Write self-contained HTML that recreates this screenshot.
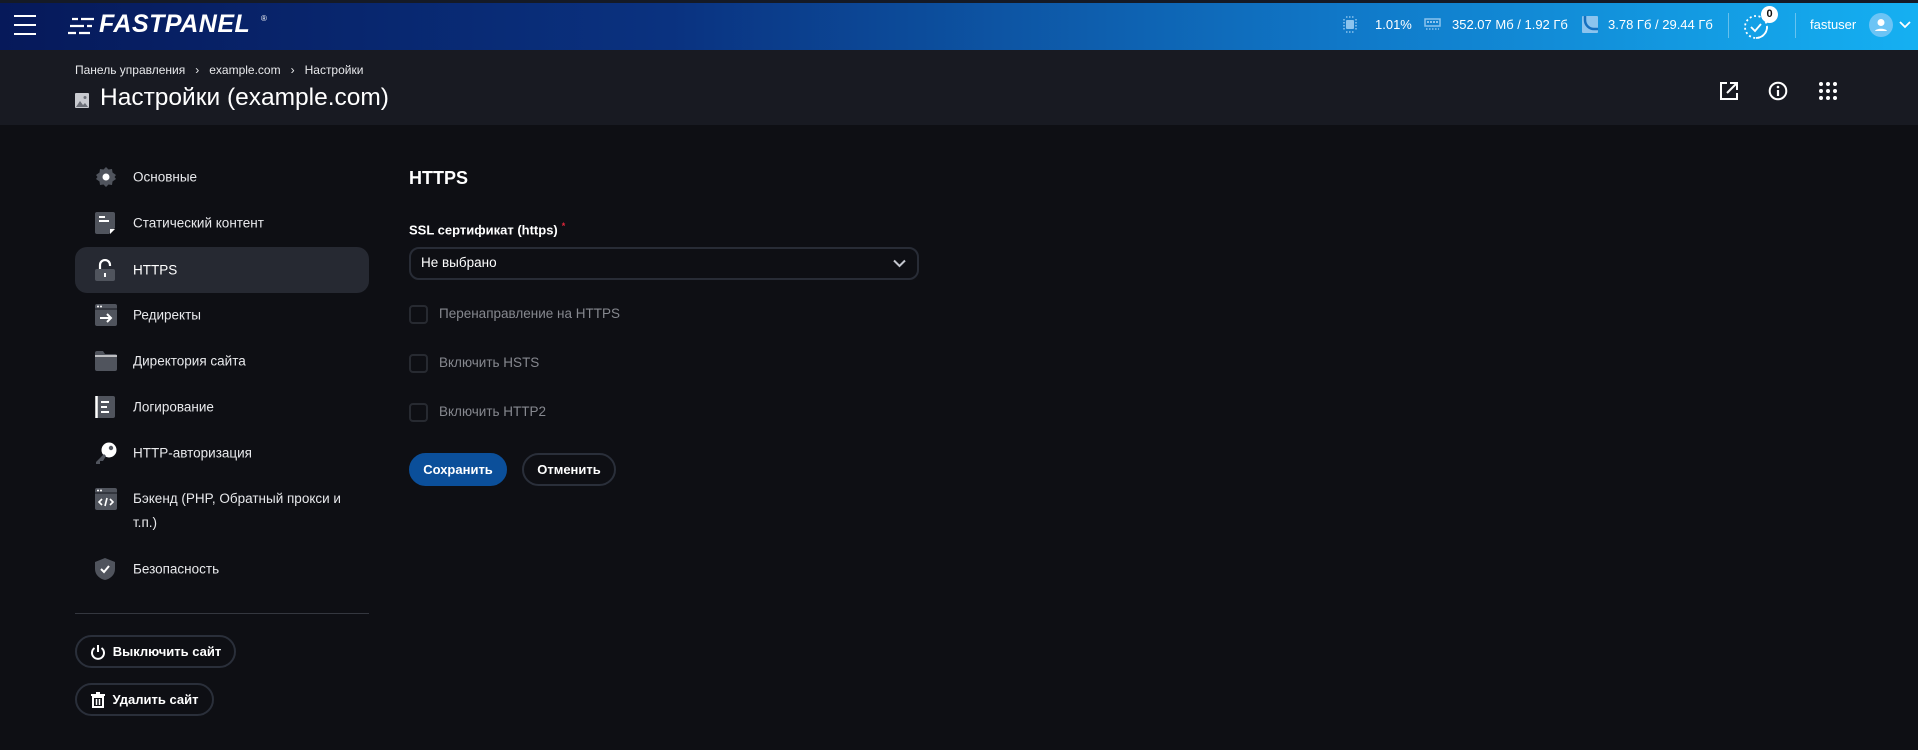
<!DOCTYPE html>
<html><head><meta charset="utf-8"><style>
*{box-sizing:border-box;margin:0;padding:0}
body{width:1918px;height:750px;overflow:hidden;background:#0e0f14;font-family:"Liberation Sans",sans-serif;color:#e8e9ec;position:relative}
.a{position:absolute}
.hdr{left:0;top:0;width:1918px;height:50px;background:linear-gradient(90deg,#06195a 0%,#0a3280 35%,#1078c8 70%,#15b0f2 100%);border-top:3px solid #151a26}
.sub{left:0;top:50px;width:1918px;height:75px;background:#181a22}
.ht{color:#fff;font-size:13px;top:17px}
.nav{left:75px;width:294px;height:46px;border-radius:12px}
.nav .t{position:absolute;left:58px;font-size:13.5px;color:#e8e9ec;top:50%;transform:translateY(-50%);white-space:nowrap}
.nav svg{position:absolute;left:20px;top:50%;transform:translateY(-50%)}
.cb{left:409px;width:19px;height:19px;border:2px solid #272a31;border-radius:4px}
.cbt{left:439px;font-size:13.5px;color:#86888f}
.btn{border:2px solid #2a2f3a;border-radius:20px;font-weight:bold;font-size:13px;color:#fff;display:flex;align-items:center;justify-content:center}
</style></head><body>
<div class="a hdr"></div>
<div class="a" style="left:14px;top:15px;width:22px;height:2px;background:#fff"></div>
<div class="a" style="left:14px;top:24px;width:22px;height:2px;background:#fff"></div>
<div class="a" style="left:14px;top:33px;width:22px;height:2px;background:#fff"></div>
<svg class="a" style="left:68px;top:15px" width="28" height="22" viewBox="0 0 28 22"><g stroke="#fff" stroke-width="2.2"><path d="M4 4h22M2 11h22M0 18h22"/></g><g fill="#06195a"><rect x="10" y="2" width="3" height="4"/><rect x="16" y="9" width="3" height="4"/><rect x="8" y="16" width="3" height="4"/></g></svg>
<div class="a" style="left:99px;top:10px;font-size:25px;font-weight:bold;font-style:italic;color:#fff;letter-spacing:0.5px">FASTPANEL</div>
<div class="a" style="left:261px;top:14px;font-size:8px;color:#fff">®</div>
<svg class="a" style="left:1343px;top:16px" width="14" height="17" viewBox="0 0 14 17"><rect x="3" y="4" width="8" height="9" rx="1" fill="#8cc4ee"/><g stroke="#8cc4ee" stroke-width="1.5" stroke-dasharray="1.5 1.5"><path d="M1 3v11M13 3v11M3 1h8M3 16h8"/></g></svg>
<div class="a ht" style="left:1375px">1.01%</div>
<svg class="a" style="left:1424px;top:18px" width="17" height="13" viewBox="0 0 17 13"><rect x="1" y="1" width="15" height="7" fill="none" stroke="#8cc4ee" stroke-width="1.5"/><path d="M3 4h11" stroke="#8cc4ee" stroke-width="2" stroke-dasharray="2 1"/><path d="M2 11h13" stroke="#8cc4ee" stroke-width="1.5" stroke-dasharray="1.5 1.5"/></svg>
<div class="a ht" style="left:1452px">352.07 Мб / 1.92 Гб</div>
<svg class="a" style="left:1582px;top:16px" width="16" height="17" viewBox="0 0 16 17"><rect x="0" y="0" width="16" height="17" rx="1" fill="#8cc4ee"/><path d="M3 0v4a9 9 0 0 0 9 9h4" fill="none" stroke="#1570c0" stroke-width="2.5"/></svg>
<div class="a ht" style="left:1608px">3.78 Гб / 29.44 Гб</div>
<div class="a" style="left:1728px;top:13px;width:1px;height:25px;background:rgba(255,255,255,.35)"></div>
<svg class="a" style="left:1742px;top:12px" width="30" height="28" viewBox="0 0 30 28"><circle cx="14" cy="15" r="11" fill="none" stroke="#fff" stroke-width="1.8" stroke-dasharray="2 2.5"/><path d="M14 26a11 11 0 0 0 11-11" fill="none" stroke="#fff" stroke-width="1.8"/><path d="M9 15l4 4 6-7" fill="none" stroke="#fff" stroke-width="1.8"/></svg>
<div class="a" style="left:1761px;top:6px;width:17px;height:17px;border-radius:50%;background:#fff;color:#111;font-size:11px;font-weight:bold;text-align:center;line-height:17px">0</div>
<div class="a" style="left:1795px;top:13px;width:1px;height:25px;background:rgba(255,255,255,.35)"></div>
<div class="a ht" style="left:1810px">fastuser</div>
<div class="a" style="left:1869px;top:13px;width:24px;height:24px;border-radius:50%;background:#6cc4f5"></div>
<svg class="a" style="left:1869px;top:13px" width="24" height="24" viewBox="0 0 24 24"><circle cx="12" cy="9.5" r="3.5" fill="#fff"/><path d="M6 18c1-3 11-3 12 0z" fill="#fff"/></svg>
<svg class="a" style="left:1899px;top:21px" width="12" height="8" viewBox="0 0 12 8"><path d="M1 1l5 5 5-5" fill="none" stroke="#fff" stroke-width="1.8"/></svg>
<div class="a sub"></div>
<div class="a" style="left:75px;top:63px;font-size:12px;color:#e8e9ec;white-space:nowrap">Панель управления &nbsp;&nbsp;›&nbsp;&nbsp; example.com &nbsp;&nbsp;›&nbsp;&nbsp; Настройки</div>
<svg class="a" style="left:75px;top:93px" width="14" height="15" viewBox="0 0 14 15"><rect width="14" height="15" rx="1" fill="#c8cad0"/><path d="M1 14l4-6 3 4 2-2 3 4z" fill="#6b6f78"/><circle cx="10" cy="4.5" r="1.5" fill="#6b6f78"/></svg>
<div class="a" style="left:100px;top:84px;font-size:24.5px;color:#fff;white-space:nowrap">Настройки (example.com)</div>
<svg class="a" style="left:1719px;top:81px" width="20" height="20" viewBox="0 0 20 20"><path d="M8 2H2v16h16v-6" fill="none" stroke="#fff" stroke-width="2"/><path d="M8 12L18 2M11 2h7v7" fill="none" stroke="#fff" stroke-width="2"/></svg>
<svg class="a" style="left:1768px;top:81px" width="20" height="20" viewBox="0 0 20 20"><circle cx="10" cy="10" r="8.3" fill="none" stroke="#fff" stroke-width="2"/><path d="M10 9v6" stroke="#fff" stroke-width="2.2"/><circle cx="10" cy="6" r="1.3" fill="#fff"/></svg>
<svg class="a" style="left:1819px;top:82px" width="18" height="18" viewBox="0 0 18 18"><g fill="#fff"><circle cx="2" cy="2" r="2"/><circle cx="9" cy="2" r="2"/><circle cx="16" cy="2" r="2"/><circle cx="2" cy="9" r="2"/><circle cx="9" cy="9" r="2"/><circle cx="16" cy="9" r="2"/><circle cx="2" cy="16" r="2"/><circle cx="9" cy="16" r="2"/><circle cx="16" cy="16" r="2"/></g></svg>
<div class="a nav" style="top:154px"><svg width="22" height="22" viewBox="0 0 22 22"><path d="M11 1l2.5 2.5 3.5-.5.5 3.5L21 9l-1.5 2 1.5 2-3.5 2.5-.5 3.5-3.5-.5L11 21l-2.5-2.5-3.5.5-.5-3.5L1 13l1.5-2L1 9l3.5-2.5.5-3.5 3.5.5z" fill="#50545d"/><circle cx="11" cy="11" r="3.5" fill="#fff"/></svg><span class="t">Основные</span></div>
<div class="a nav" style="top:200px"><svg width="20" height="22" viewBox="0 0 20 22"><path d="M2 0h16a2 2 0 0 1 2 2v14l-6 6H2a2 2 0 0 1-2-2V2a2 2 0 0 1 2-2z" fill="#50545d"/><path d="M4 5h6M4 9h10" stroke="#fff" stroke-width="2"/><path d="M15 22l5-5h-5z" fill="#fff"/></svg><span class="t">Статический контент</span></div>
<div class="a nav" style="top:247px;background:#262932"><svg width="20" height="22" viewBox="0 0 20 22"><path d="M5 10V6a5 5 0 0 1 10 0v1" fill="none" stroke="#fff" stroke-width="2.2"/><rect x="0" y="10" width="20" height="12" rx="2" fill="#50545d"/><path d="M10 14v4" stroke="#fff" stroke-width="2"/></svg><span class="t" style="color:#fff">HTTPS</span></div>
<div class="a nav" style="top:292px"><svg width="22" height="22" viewBox="0 0 22 22"><rect width="22" height="22" rx="2" fill="#50545d"/><path d="M0 5h22" stroke="#16181e" stroke-width="1"/><circle cx="3" cy="2.5" r="1" fill="#fff"/><circle cx="6" cy="2.5" r="1" fill="#fff"/><path d="M5 14h11M12 10l4 4-4 4" fill="none" stroke="#fff" stroke-width="2"/></svg><span class="t">Редиректы</span></div>
<div class="a nav" style="top:338px"><svg width="22" height="20" viewBox="0 0 22 20"><path d="M0 2a2 2 0 0 1 2-2h6l2 3h10a2 2 0 0 1 2 2v13a2 2 0 0 1-2 2H2a2 2 0 0 1-2-2z" fill="#50545d"/><path d="M0 5h22" stroke="#fff" stroke-width="1.2"/></svg><span class="t">Директория сайта</span></div>
<div class="a nav" style="top:384px"><svg width="20" height="22" viewBox="0 0 20 22"><rect x="1" width="19" height="22" rx="2" fill="#50545d"/><path d="M1.5 0v22" stroke="#fff" stroke-width="2.5"/><path d="M6 6h8M6 11h6M6 16h8" stroke="#fff" stroke-width="2"/></svg><span class="t">Логирование</span></div>
<div class="a nav" style="top:430px"><svg width="22" height="22" viewBox="0 0 22 22"><circle cx="14" cy="8" r="7.5" fill="#fff"/><path d="M9 12L1 20v2h4v-3h3l3-5" fill="#50545d"/><circle cx="16" cy="6" r="2.2" fill="#50545d"/></svg><span class="t">HTTP-авторизация</span></div>
<div class="a nav" style="top:476px;height:48px"><svg style="top:12px;transform:none" width="22" height="22" viewBox="0 0 22 22"><rect width="22" height="22" rx="2" fill="#50545d"/><path d="M0 5h22" stroke="#16181e"/><circle cx="3" cy="2.5" r="1" fill="#fff"/><circle cx="6" cy="2.5" r="1" fill="#fff"/><path d="M7 11l-3 3 3 3M15 11l3 3-3 3M12 10l-2 8" fill="none" stroke="#fff" stroke-width="1.6"/></svg><span class="t" style="top:11px;transform:none;line-height:24px;white-space:normal;width:220px">Бэкенд (PHP, Обратный прокси и т.п.)</span></div>
<div class="a nav" style="top:546px"><svg width="20" height="22" viewBox="0 0 20 22"><path d="M10 0l10 4v7c0 6-5 10-10 11C5 21 0 17 0 11V4z" fill="#50545d"/><path d="M6 11l3 3 5-6" fill="none" stroke="#fff" stroke-width="2"/></svg><span class="t">Безопасность</span></div>
<div class="a" style="left:75px;top:613px;width:294px;height:1px;background:#34373f"></div>
<div class="a btn" style="left:75px;top:635px;width:161px;height:33px"><svg width="16" height="16" viewBox="0 0 16 16" style="margin-right:7px"><path d="M4.5 4a6 6 0 1 0 7 0" fill="none" stroke="#fff" stroke-width="2"/><path d="M8 1v7" stroke="#fff" stroke-width="2"/></svg>Выключить сайт</div>
<div class="a btn" style="left:75px;top:683px;width:139px;height:33px"><svg width="14" height="16" viewBox="0 0 14 16" style="margin-right:8px"><path d="M0 3h14M5 1h4" stroke="#fff" stroke-width="2"/><path d="M2 5h10v10H2z" fill="none" stroke="#fff" stroke-width="2"/><path d="M5.5 7v6M8.5 7v6" stroke="#fff" stroke-width="1.5"/></svg>Удалить сайт</div>
<div class="a" style="left:409px;top:168px;font-size:18px;font-weight:bold;color:#fff">HTTPS</div>
<div class="a" style="left:409px;top:221px;font-size:13px;font-weight:bold;color:#fff">SSL сертификат (https)<sup style="color:#e0263a;font-size:9px;margin-left:4px">*</sup></div>
<div class="a" style="left:409px;top:247px;width:510px;height:33px;border:2px solid #282c36;border-radius:10px"></div>
<div class="a" style="left:421px;top:255px;font-size:13.5px;color:#fff">Не выбрано</div>
<svg class="a" style="left:893px;top:259px" width="13" height="9" viewBox="0 0 13 9"><path d="M1 1.5l5.5 5.5 5.5-5.5" fill="none" stroke="#c4c7cf" stroke-width="2"/></svg>
<div class="a cb" style="top:305px"></div><div class="a cbt" style="top:306px">Перенаправление на HTTPS</div>
<div class="a cb" style="top:354px"></div><div class="a cbt" style="top:355px">Включить HSTS</div>
<div class="a cb" style="top:403px"></div><div class="a cbt" style="top:404px">Включить HTTP2</div>
<div class="a btn" style="left:409px;top:453px;width:98px;height:33px;background:#0b4f9a;border-color:#0b4f9a">Сохранить</div>
<div class="a btn" style="left:522px;top:453px;width:94px;height:33px">Отменить</div>
</body></html>
